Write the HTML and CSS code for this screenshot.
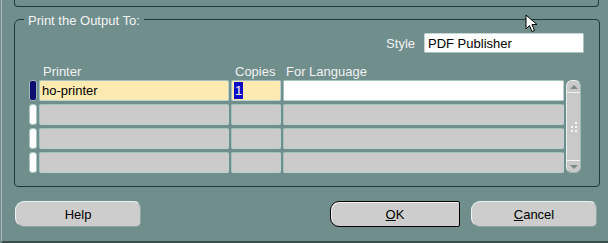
FILE: index.html
```html
<!DOCTYPE html>
<html lang="en">
<head>
<meta charset="UTF-8">
<title>Print Options</title>
<link rel="stylesheet" href="styles.css">
</head>
<body>
<div class="frame">
  <div class="top-panel"></div>

  <div class="group">
    <div class="legend">Print the Output To:</div>

    <div class="style-row">
      <span class="label">Style</span>
      <div class="field field-white">PDF Publisher</div>
    </div>

    <div class="grid head">
      <span></span>
      <span class="label">Printer</span>
      <span class="label">Copies</span>
      <span class="label">For Language</span>
    </div>

    <div class="grid rows">
      <div class="ind current"></div>
      <div class="cell yellow">ho-printer</div>
      <div class="cell yellow"><span class="sel">1</span></div>
      <div class="cell white"></div>

      <div class="scroll">
        <div class="arrow up"></div>
        <div class="grip">
          <i></i><i></i><i></i><i></i><i></i>
        </div>
        <div class="arrow down"></div>
      </div>

      <div class="ind"></div>
      <div class="cell"></div>
      <div class="cell"></div>
      <div class="cell"></div>

      <div class="ind"></div>
      <div class="cell"></div>
      <div class="cell"></div>
      <div class="cell"></div>

      <div class="ind"></div>
      <div class="cell"></div>
      <div class="cell"></div>
      <div class="cell"></div>
    </div>
  </div>

  <div class="buttons">
    <button class="btn">Help</button>
    <div class="spacer"></div>
    <button class="btn btn-default"><u>O</u>K</button>
    <button class="btn"><u>C</u>ancel</button>
  </div>

  <svg class="pointer" width="14" height="20" viewBox="0 0 14 20">
    <path d="M1 1 L1 15 L4.5 11.5 L7 17.5 L9.5 16.5 L7 10.5 L12 10.5 Z" fill="#fff" stroke="#000" stroke-width="1"/>
  </svg>
</div>
</body>
</html>
```

FILE: styles.css
```css
body {
margin: 0;
background-color: #6f8e8c;
font-family: "Liberation Sans", Arial, sans-serif;
font-size: 13px;
}

.frame {
position: relative;
box-sizing: border-box;
width: 607px;
height: 243px;
margin-left: 1px;
border-left: 1px solid #a9b9b8;
border-bottom: 2px solid #3d4d4d;
padding: 0 8px 0 12px;
overflow: hidden;
}

.top-panel {
height: 6px;
margin-right: 1px;
border: 1px solid #1f3a3a;
border-top: none;
border-radius: 0 0 4px 4px;
}

.group {
margin-top: 12px;
border: 1px solid #1f3a3a;
border-radius: 6px 4px 4px 4px;
padding: 0 15px 13px 14px;
}

.legend {
display: table;
margin: -7px 0 0 -5px;
padding: 0 4px;
line-height: 16px;
color: #f4f4f4;
background-color: #6f8e8c;
}

.label {
color: #f2f2f2;
}

.style-row {
display: flex;
justify-content: flex-end;
align-items: center;
gap: 9px;
margin-top: 4px;
}

.field {
box-sizing: border-box;
width: 160px;
height: 20px;
line-height: 19px;
padding-left: 3px;
border: 1px solid #c4d6d5;
border-right-color: #a9c3c2;
border-bottom-color: #a9c3c2;
border-radius: 2px;
color: #000;
}

.field-white {
background-color: #fff;
}

.grid {
display: grid;
grid-template-columns: 8px 190px 50px 281px 15px;
column-gap: 2px;
}

.head {
margin-top: 12px;
line-height: 14px;
}

.head .label {
padding-left: 4px;
}

.head .label:last-child {
padding-left: 3px;
}

.rows {
margin-top: 1px;
grid-auto-rows: 21px;
row-gap: 3px;
}

.ind {
box-sizing: border-box;
border: 1px solid #a9c6c4;
border-radius: 3px;
background-color: #fff;
}

.ind.current {
background-color: #0c0c72;
border-color: #9cb8b6;
}

.cell {
box-sizing: border-box;
border: 1px solid #a3c1bf;
border-right-color: #bcd3d2;
border-bottom-color: #bcd3d2;
border-radius: 2px;
background-color: #cbcbcb;
padding: 1px 0 0 2px;
line-height: 18px;
color: #000;
}

.cell.yellow {
background-color: #fdeab0;
}

.cell.white {
background-color: #fff;
}

.sel {
display: inline-block;
background-color: #0a0ac4;
color: #fff;
padding: 0 1px;
line-height: 17px;
}

.scroll {
grid-column: 5;
grid-row: 1 / span 4;
display: flex;
flex-direction: column;
box-sizing: border-box;
border: 1px solid #e6eeee;
border-right-color: #9dbbb9;
border-bottom-color: #9dbbb9;
border-radius: 6px;
background-color: #c9c9c9;
}

.arrow {
height: 11px;
display: flex;
justify-content: center;
align-items: center;
}

.arrow.up {
border-bottom: 1px solid #eef3f3;
}

.arrow.down {
border-top: 1px solid #eef3f3;
}

.arrow::before {
content: "";
border-left: 4px solid transparent;
border-right: 4px solid transparent;
}

.arrow.up::before {
border-bottom: 4px solid #7c8a8a;
}

.arrow.down::before {
border-top: 4px solid #7c8a8a;
}

.grip {
flex: 1;
display: grid;
grid-template-columns: 2px 2px;
grid-auto-rows: 2px;
gap: 2px 2px;
align-content: center;
justify-content: center;
}

.grip i {
background-color: #f4f4f4;
}

.grip i:nth-child(1) { grid-column: 2; }
.grip i:nth-child(4) { grid-column: 1; }

.buttons {
display: flex;
gap: 11px;
margin-top: 14px;
padding: 0 3px 0 1px;
}

.spacer {
flex: 1;
}

.btn {
box-sizing: border-box;
width: 126px;
height: 26px;
padding: 0;
border: 1px solid #eef4f4;
border-right-color: #8ea6a5;
border-bottom-color: #8ea6a5;
border-radius: 9px 7px 5px 9px;
background-color: #cdcdcd;
font-family: "Liberation Sans", Arial, sans-serif;
font-size: 13px;
color: #000;
}

.btn-default {
width: 130px;
border: 1px solid #000;
border-radius: 9px 2px 2px 9px;
box-shadow: inset 1px 1px 0 #f2f2f2;
}

.pointer {
position: absolute;
left: 523px;
top: 14px;
}
```
